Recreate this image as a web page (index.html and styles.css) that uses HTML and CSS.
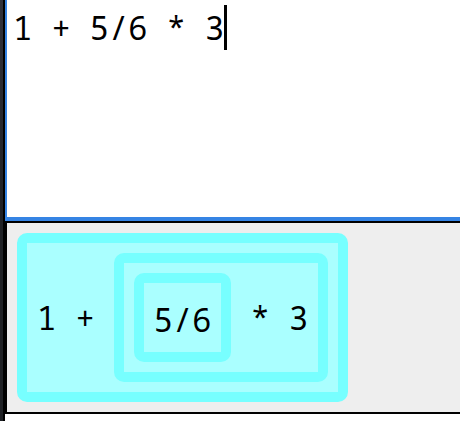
FILE: index.html
```html
<!DOCTYPE html>
<html lang="en">
<head>
<meta charset="utf-8">
<title>Expression tree</title>
<link rel="stylesheet" href="styles.css">
</head>
<body>
<div class="app">
  <div class="edge"></div>
  <main class="workspace">
    <div class="editor">
      <textarea class="source" aria-label="Expression" spellcheck="false">1 + 5/6 * 3</textarea>
      <span class="caret"></span>
    </div>
    <section class="output" aria-label="Parsed expression">
      <div class="node">
        <span>1 + </span>
        <div class="node">
          <div class="node leaf"><span>5/6</span></div>
          <span> * 3</span>
        </div>
      </div>
    </section>
  </main>
</div>
</body>
</html>
```

FILE: styles.css
```css
* {
  box-sizing: border-box;
}

body {
  margin: 0;
  background: #fff;
  color: #000;
  font: 32px/45px "Noto Sans Mono", "DejaVu Sans Mono", monospace;
}

.app {
  display: flex;
  min-height: 100vh;
}

.edge {
  flex: none;
  width: 5px;
  border-right: 2px solid #000;
  background: linear-gradient(#31323a, #1f2125 50%);
}

.workspace {
  flex: 1;
  min-width: 0;
}

.editor {
  position: relative;
}

.source {
  display: block;
  width: 100%;
  height: 221px;
  margin: 0;
  padding: 5px 6px;
  border: solid #3584e4;
  border-width: 0 0 4px 2px;
  outline: none;
  resize: none;
  overflow: hidden;
  background: #fff;
  color: inherit;
  font: inherit;
}

/* Sits after the eleventh character of the source line. */
.caret {
  position: absolute;
  top: 5px;
  left: calc(8px + 11ch);
  width: 3px;
  height: 45px;
  background: #000;
}

.output {
  display: flex;
  align-items: flex-start;
  padding: 10px;
  border: 2px solid #000;
  border-right: 0;
  background: #eee;
}

.node {
  display: flex;
  align-items: center;
  padding: 10px;
  border: 10px solid #7ff;
  border-radius: 10px;
  background: #aff;
  white-space: pre;
}

.leaf {
  padding: 14px 10px 10px;
}
```
